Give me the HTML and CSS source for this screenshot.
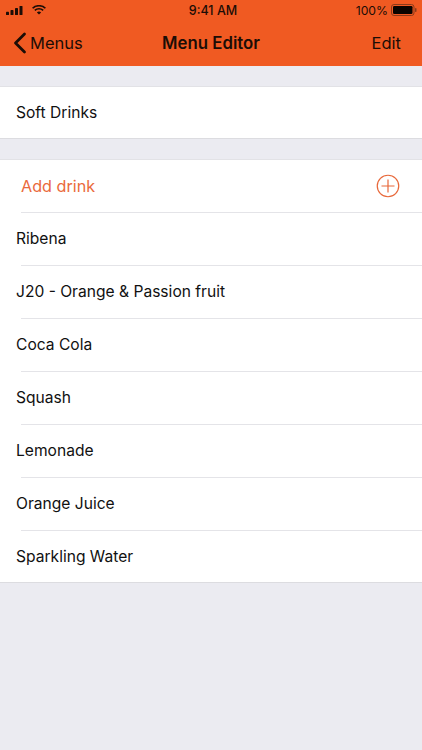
FILE: index.html
```html
<!DOCTYPE html>
<html lang="en">
<head>
<meta charset="utf-8">
<title>Menu Editor</title>
<link rel="stylesheet" href="styles.css">
</head>
<body>
<header class="header">
  <div class="status">
    <div class="status-left">
      <svg class="signal" width="18" height="9" viewBox="0 0 18 11" preserveAspectRatio="none"><rect x="0" y="7" width="3" height="4" rx=".7"/><rect x="4.5" y="5" width="3" height="6" rx=".7"/><rect x="9" y="2.5" width="3" height="8.5" rx=".7"/><rect x="13.5" y="0" width="3" height="11" rx=".7"/></svg>
      <svg class="wifi" width="14" height="10" viewBox="0 0 16 12" preserveAspectRatio="none"><path d="M8 11.5 5.6 8.9a3.4 3.4 0 0 1 4.8 0zM3.9 7.2 2.6 5.8a7.7 7.7 0 0 1 10.8 0l-1.3 1.4a5.8 5.8 0 0 0-8.2 0zM1.4 4.6 0 3.2a11.4 11.4 0 0 1 16 0l-1.4 1.4a9.4 9.4 0 0 0-13.2 0z"/></svg>
    </div>
    <div class="status-time">9:41 AM</div>
    <div class="status-right">
      <span>100%</span>
      <svg class="battery" width="26" height="12" viewBox="0 0 26 12"><rect x=".5" y=".5" width="22.5" height="11" rx="2.5" fill="none" stroke="#8a3a1a"/><rect x="2" y="2" width="19.5" height="8" rx="1.2" fill="#0a0400"/><rect x="24" y="4" width="1.5" height="4" rx=".7" fill="#8a3a1a"/></svg>
    </div>
  </div>
  <nav class="nav">
    <div class="back">
      <svg class="chevron" width="14" height="22" viewBox="0 0 14 22"><path d="M11.5 2 2.5 11l9 9" fill="none" stroke="#1c0d06" stroke-width="2.8" stroke-linecap="round" stroke-linejoin="round"/></svg>
      <span>Menus</span>
    </div>
    <div class="title">Menu Editor</div>
    <div class="edit">Edit</div>
  </nav>
</header>
<main class="content">
  <section class="group">
    <div class="row row-name">Soft Drinks</div>
  </section>
  <section class="group">
    <div class="row row-add">
      <span>Add drink</span>
      <svg class="plus" width="24" height="24" viewBox="0 0 24 24"><circle cx="12" cy="12" r="10.75" fill="none" stroke="#e8683a" stroke-width="1.2"/><path d="M12 5.5v13M5.5 12h13" fill="none" stroke="#e8683a" stroke-width="1.2"/></svg>
    </div>
    <div class="row">Ribena</div>
    <div class="row">J20 - Orange &amp; Passion fruit</div>
    <div class="row">Coca Cola</div>
    <div class="row">Squash</div>
    <div class="row">Lemonade</div>
    <div class="row">Orange Juice</div>
    <div class="row">Sparkling Water</div>
  </section>
</main>
</body>
</html>
```
FILE: styles.css
```css
* { box-sizing: border-box; }
html, body { margin: 0; padding: 0; }
body {
  width: 422px;
  height: 750px;
  overflow: hidden;
  background: #ebebf1;
  font-family: Inter, "Liberation Sans", sans-serif;
  color: #111;
}
.header { height: 66px; background: #f05a22; color: #1c0d06; }
.status {
  height: 20px;
  padding: 0 5px;
  display: grid;
  grid-template-columns: 1fr auto 1fr;
  align-items: center;
  font-size: 12.5px;
}
.status-left { display: flex; align-items: center; gap: 8px; padding-left: 1px; }
.signal, .wifi { fill: #1c0d06; display: block; }
.status-time { font-weight: 500; padding-left: 4px; }
.status-right { display: flex; justify-content: flex-end; align-items: center; gap: 3px; font-size: 12.2px; }
.nav {
  height: 46px;
  display: grid;
  grid-template-columns: 1fr auto 1fr;
  align-items: center;
  padding: 0 21px;
  font-size: 16.5px;
}
.back { display: flex; align-items: center; gap: 3px; margin-left: -8px; }
.chevron { display: block; }
.title { font-weight: 600; font-size: 16.8px; }
.edit { text-align: right; }
.content { padding-top: 20px; display: flex; flex-direction: column; gap: 20px; }
.group {
  background: #fff;
  border-top: 1px solid #e2e2e6;
  border-bottom: 1px solid #dcdce0;
}
.row {
  height: 53px;
  padding-left: 16px;
  display: flex;
  align-items: center;
  font-size: 15.6px;
  position: relative;
}
.row:last-child { height: 52px; }
.row-name.row-name { height: 51px; }
.group .row + .row::before {
  content: "";
  position: absolute;
  top: 0;
  left: 21px;
  right: 0;
  height: 1px;
  background: #e4e4e8;
}
.row-add {
  height: 52px;
  padding: 0 22px 0 21px;
  justify-content: space-between;
  color: #ea6a3c;
  font-size: 16.2px;
}
.plus { display: block; }
```
